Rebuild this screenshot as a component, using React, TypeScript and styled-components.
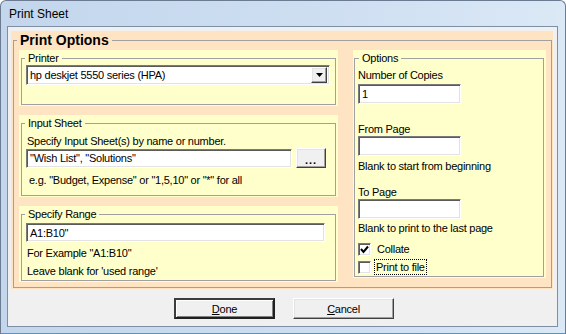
import React from 'react';
import styled, { createGlobalStyle } from 'styled-components';

const GlobalStyle = createGlobalStyle`
  html, body {
    margin: 0;
    padding: 0;
    background: #ffffff;
  }
  body {
    font-family: "Liberation Sans", Arial, sans-serif;
    font-size: 11px;
    letter-spacing: -0.25px;
    color: #000000;
  }
  * {
    box-sizing: border-box;
  }
`;

const Window = styled.div`
  width: 566px;
  height: 334px;
  display: flex;
  flex-direction: column;
  background: linear-gradient(90deg, #c3d6ec 0%, #cddef1 55%, #dbe8f6 100%);
  border: 1px solid #6b7c92;
  border-bottom-color: #3e9dd4;
  border-radius: 6px 6px 0 0;
`;

const TitleBar = styled.div`
  height: 25px;
  padding-left: 8px;
  display: flex;
  align-items: center;
  font-size: 12px;
  letter-spacing: 0;
  color: #000000;
`;

const Client = styled.div`
  flex: 1;
  margin: 0 7px 6px 6px;
  border: 1px solid #7f8fa3;
  background: #f0f0f0;
  display: flex;
  flex-direction: column;
`;

const Peach = styled.div`
  margin: 4px 4px 0 3px;
  padding: 0 1px 1px 2px;
  background: #ffe4c4;
`;

const GroupBox = styled.fieldset<{ $pad: string }>`
  margin: 0;
  min-width: 0;
  border: 1px solid #a0a0a0;
  padding: ${(p) => p.$pad};
`;

const BigLegend = styled.legend`
  margin-left: -2px;
  padding: 0 3px;
  font-size: 14px;
  font-weight: bold;
  letter-spacing: 0;
  line-height: 18px;
`;

const Legend = styled.legend<{ $ml?: number }>`
  margin-left: ${(p) => p.$ml ?? -1}px;
  padding: 0 3px;
  line-height: 14px;
`;

const Columns = styled.div`
  display: grid;
  grid-template-columns: 319px 193px;
  column-gap: 15px;
  align-items: start;
`;

const LeftColumn = styled.div`
  display: flex;
  flex-direction: column;
  gap: 9px;
`;

const Yellow = styled.div<{ $pad?: string }>`
  background: #ffffcc;
  padding: ${(p) => p.$pad ?? '1px 2px'};
`;

const Text = styled.div<{ $mt?: number; $ml?: number }>`
  margin-top: ${(p) => p.$mt ?? 0}px;
  margin-left: ${(p) => p.$ml ?? 0}px;
  line-height: 14px;
  white-space: nowrap;
`;

const sunken = `
  background: #ffffff;
  border: 1px solid;
  border-color: #7a7a7a #ffffff #ffffff #7a7a7a;
  box-shadow: inset 1px 1px 0 #5a5a5a, inset -1px -1px 0 #e3e3e3;
`;

const raised = `
  background: #f0f0f0;
  border: 1px solid;
  border-color: #ffffff #404040 #404040 #ffffff;
  box-shadow: inset -1px -1px 0 #a0a0a0, inset 1px 1px 0 #e3e3e3;
`;

const TextBox = styled.div<{ $w: number; $h?: number; $mt?: number }>`
  ${sunken}
  width: ${(p) => p.$w}px;
  height: ${(p) => p.$h ?? 20}px;
  margin-top: ${(p) => p.$mt ?? 0}px;
  padding: 0 3px;
  display: flex;
  align-items: center;
  white-space: nowrap;
  flex-shrink: 0;
`;

const Combo = styled.div`
  ${sunken}
  width: 304px;
  height: 20px;
  padding: 0 2px 0 3px;
  display: flex;
  align-items: center;
  justify-content: space-between;
`;

const DropButton = styled.div`
  ${raised}
  width: 16px;
  height: 16px;
  display: flex;
  align-items: center;
  justify-content: center;
`;

const Row = styled.div<{ $mt?: number; $gap?: number }>`
  display: flex;
  align-items: center;
  gap: ${(p) => p.$gap ?? 4}px;
  margin-top: ${(p) => p.$mt ?? 0}px;
`;

const BrowseButton = styled.div`
  ${raised}
  width: 30px;
  height: 20px;
  display: flex;
  align-items: flex-end;
  justify-content: center;
  padding-bottom: 2px;
  font-weight: bold;
  font-size: 11px;
  letter-spacing: 1px;
  line-height: 10px;
`;

const CheckBox = styled.span`
  ${sunken}
  width: 13px;
  height: 13px;
  display: inline-flex;
  align-items: center;
  justify-content: center;
  flex-shrink: 0;
`;

const CheckLabel = styled.span<{ $focus?: boolean }>`
  line-height: 14px;
  padding: 0 1px;
  outline: ${(p) => (p.$focus ? '1px dotted #000000' : 'none')};
`;

const Footer = styled.div`
  display: flex;
  justify-content: center;
  gap: 18px;
  margin-top: 9px;
  padding-left: 3px;
`;

const PushButton = styled.div<{ $default?: boolean }>`
  ${raised}
  width: 101px;
  height: 21px;
  display: flex;
  align-items: center;
  justify-content: center;
  font-size: 11px;
  ${(p) =>
    p.$default &&
    `
    border: 2px solid;
    border-color: #3c3c3c #202020 #202020 #3c3c3c;
    box-shadow: inset 1px 1px 0 #ffffff, inset -1px -1px 0 #808080;
  `}
`;

const ArrowDown = () => (
  <svg width="7" height="4" viewBox="0 0 7 4">
    <polygon points="0,0 7,0 3.5,4" fill="#000" />
  </svg>
);

const Tick = () => (
  <svg width="9" height="9" viewBox="0 0 9 9">
    <polyline points="1,4 3.5,7 8,1.5" fill="none" stroke="#000" strokeWidth="2" />
  </svg>
);

export default function App() {
  return (
    <>
      <GlobalStyle />
      <Window>
        <TitleBar>Print Sheet</TitleBar>
        <Client>
          <Peach>
            <GroupBox $pad="1px 5px 5px 5px">
              <BigLegend>Print Options</BigLegend>
              <Columns>
                <LeftColumn>
                  <Yellow>
                    <GroupBox $pad="0 4px 19px 4px">
                      <Legend>Printer</Legend>
                      <Combo>
                        <span>hp deskjet 5550 series (HPA)</span>
                        <DropButton>
                          <ArrowDown />
                        </DropButton>
                      </Combo>
                    </GroupBox>
                  </Yellow>

                  <Yellow>
                    <GroupBox $pad="0 4px 8px 4px">
                      <Legend>Input Sheet</Legend>
                      <Text $mt={4} $ml={1}>Specify Input Sheet(s) by name or number.</Text>
                      <Row>
                        <TextBox $w={266} $h={19}>"Wish List", "Solutions"</TextBox>
                        <BrowseButton>...</BrowseButton>
                      </Row>
                      <Text $mt={5} $ml={3}>e.g. "Budget, Expense" or "1,5,10" or "*" for all</Text>
                    </GroupBox>
                  </Yellow>

                  <Yellow>
                    <GroupBox $pad="0 4px 2px 4px">
                      <Legend>Specify Range</Legend>
                      <TextBox $w={299} $h={19} $mt={2}>A1:B10"</TextBox>
                      <Text $mt={4} $ml={1}>For Example "A1:B10"</Text>
                      <Text $mt={4} $ml={1}>Leave blank for 'used range'</Text>
                    </GroupBox>
                  </Yellow>
                </LeftColumn>

                <Yellow $pad="1px 2px 1px 1px">
                  <GroupBox $pad="0 3px 2px 3px">
                    <Legend $ml={1}>Options</Legend>
                    <Text $mt={3}>Number of Copies</Text>
                    <TextBox $w={103} $mt={2}>1</TextBox>
                    <Text $mt={18}>From Page</Text>
                    <TextBox $w={103} />
                    <Text $mt={3}>Blank to start from beginning</Text>
                    <Text $mt={12}>To Page</Text>
                    <TextBox $w={103} />
                    <Text $mt={2}>Blank to print to the last page</Text>
                    <Row $mt={7} $gap={5}>
                      <CheckBox>
                        <Tick />
                      </CheckBox>
                      <CheckLabel>Collate</CheckLabel>
                    </Row>
                    <Row $mt={4} $gap={4}>
                      <CheckBox />
                      <CheckLabel $focus>Print to file</CheckLabel>
                    </Row>
                  </GroupBox>
                </Yellow>
              </Columns>
            </GroupBox>
          </Peach>

          <Footer>
            <PushButton $default>
              <span>
                <u>D</u>one
              </span>
            </PushButton>
            <PushButton>
              <span>
                <u>C</u>ancel
              </span>
            </PushButton>
          </Footer>
        </Client>
      </Window>
    </>
  );
}
